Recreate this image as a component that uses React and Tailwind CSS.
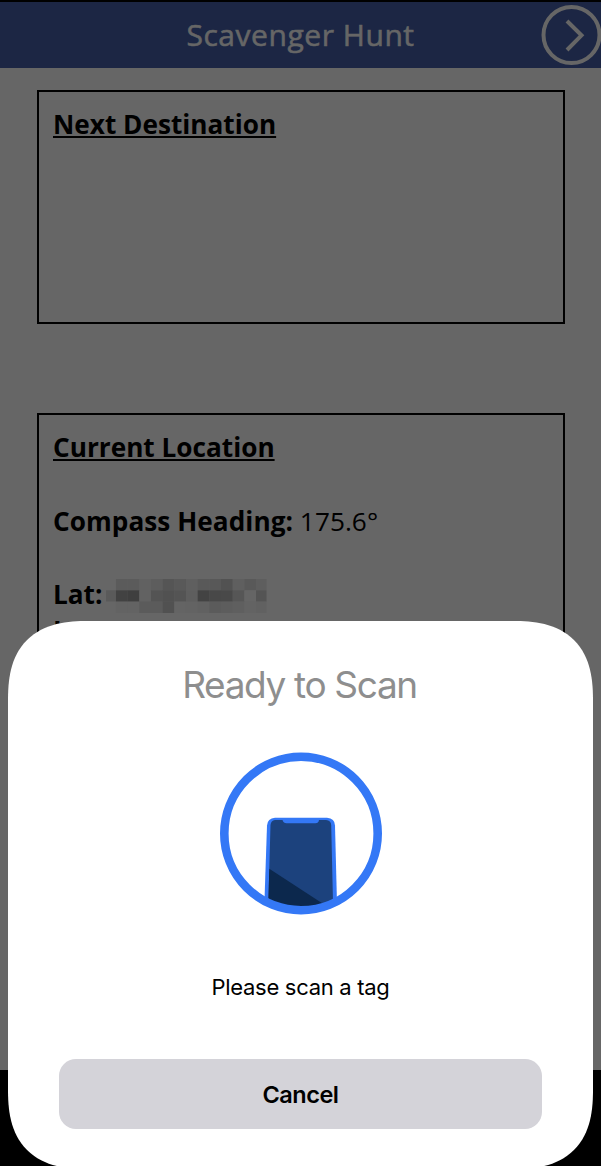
const MOSAIC = [
  ["#666666", "#5b5b5b", "#5b5b5b", "#616161", "#5d5d5d", "#555555", "#595959", "#5f5f5f", "#595959", "#585858", "#525252", "#5f5f5f", "#595959", "#5e5e5e"],
  ["#5a5a5a", "#424242", "#3f3f3f", "#626262", "#545454", "#515151", "#545454", "#5e5e5e", "#434343", "#484848", "#494949", "#565656", "#656565", "#545454"],
  ["#666666", "#636363", "#636363", "#5b5b5b", "#5b5b5b", "#515151", "#646464", "#636363", "#616161", "#5b5b5b", "#5d5d5d", "#5f5f5f", "#636363", "#616161"],
];

function RedactedValue() {
  return (
    <svg className="ml-[2px] mt-[4px] h-[34px] w-[163px] shrink-0" viewBox="0 0 163 34" aria-hidden="true">
      {MOSAIC.map((row, r) =>
        row.map((fill, c) => (
          <rect
            key={`${r}-${c}`}
            x={c === 0 ? 2 : c * 11.67 + 0.3}
            y={r * 11.3}
            width={c === 0 ? 10 : c === 13 ? 10.5 : 11.8}
            height="11.4"
            fill={fill}
          />
        ))
      )}
    </svg>
  );
}

function PhoneIcon() {
  return (
    <svg className="h-[162px] w-[162px] overflow-visible" viewBox="0 0 162 162" aria-hidden="true">
      <clipPath id="disc">
        <circle cx="81" cy="80.500" r="77" />
      </clipPath>
      <g clipPath="url(#disc)">
        <path d="M55 64.800H107Q114.8 65.300 115 72.500L117.300 162H44L47 72.500Q47.500 65.300 55 64.800Z" fill="#3478f6" />
        <path d="M55 67H62.500Q63.500 70.300 66.500 70.300H95.500Q98.500 70.300 99 67H106Q111 67.500 111.200 72L113.300 162H48L50.500 72Q51 67.500 55 67Z" fill="#1c427d" />
        <path d="M49.300 115.700L111 156V162H48Z" fill="#0c284d" />
      </g>
      <circle cx="81" cy="80.500" r="76.700" fill="none" stroke="#3478f6" strokeWidth="8.600" />
    </svg>
  );
}

function Header() {
  return (
    <header className="flex h-[68px] shrink-0 items-center justify-center border-t-2 border-black bg-[#1c2644]">
      <div className="w-[60px]" />
      <h1 className="flex-1 whitespace-nowrap text-center text-[30px] leading-[66px] tracking-[0.55px] text-[#666666] [-webkit-text-stroke:0.6px_#666666]">
        Scavenger Hunt
      </h1>
      <svg className="h-[62px] w-[60px] overflow-visible" viewBox="0 0 60 62" fill="none" stroke="#666666" strokeWidth="4" aria-hidden="true">
        <circle cx="30.500" cy="31" r="28" />
        <path d="M26 17L40.500 31.300L26 46" />
      </svg>
    </header>
  );
}

function ScanSheet() {
  return (
    <section className="absolute left-[8px] top-[621px] flex h-[548px] w-[585px] flex-col items-center rounded-[66px] bg-white font-['Inter',sans-serif] supports-[corner-shape:squircle]:rounded-[80px] supports-[corner-shape:squircle]:[corner-shape:superellipse(1.35)]">
      <h2 className="mr-[2px] mt-[40px] whitespace-nowrap text-[37px] font-normal leading-[48px] tracking-[-1.35px] text-[#8e8e8e]">Ready to Scan</h2>
      <div className="mt-[44px]">
        <PhoneIcon />
      </div>
      <p className="mt-[56px] whitespace-nowrap text-[22px] leading-[32px] tracking-[-0.3px] text-black">Please scan a tag</p>
      <button className="mt-[56px] h-[70px] w-[483px] rounded-[17px] bg-[#d4d3d9] pt-[2px] text-[23.500px] font-semibold tracking-[-0.500px] text-black">
        Cancel
      </button>
    </section>
  );
}

export default function App() {
  return (
    <div className="relative flex h-[1166px] w-[601px] flex-col overflow-hidden bg-black font-['Open_Sans',sans-serif] text-black">
      <Header />
      <main className="flex h-[1002px] shrink-0 flex-col gap-[89px] overflow-hidden bg-[#666666] px-[36.500px] pt-[22px]">
        <section className="h-[234px] shrink-0 border-2 border-black px-[14.500px] pt-[14px]">
          <h2 className="text-[26.200px] font-bold leading-[36.700px] underline decoration-[1.5px] underline-offset-[2px]">Next Destination</h2>
        </section>
        <section className="h-[640px] shrink-0 border-2 border-black px-[14.500px] pt-[14px] text-[26.200px] leading-[36.700px]">
          <h2 className="font-bold underline decoration-[1.5px] underline-offset-[2px]">Current Location</h2>
          <p className="mt-[37.300px] tracking-[0.05px]">
            <strong>Compass Heading:</strong> 175.6°
          </p>
          <div className="mt-[36.100px] flex h-[36.700px] items-center">
            <strong>Lat:</strong>
            <RedactedValue />
          </div>
          <p>
            <strong>Long:</strong>
          </p>
        </section>
      </main>
      <ScanSheet />
    </div>
  );
}
